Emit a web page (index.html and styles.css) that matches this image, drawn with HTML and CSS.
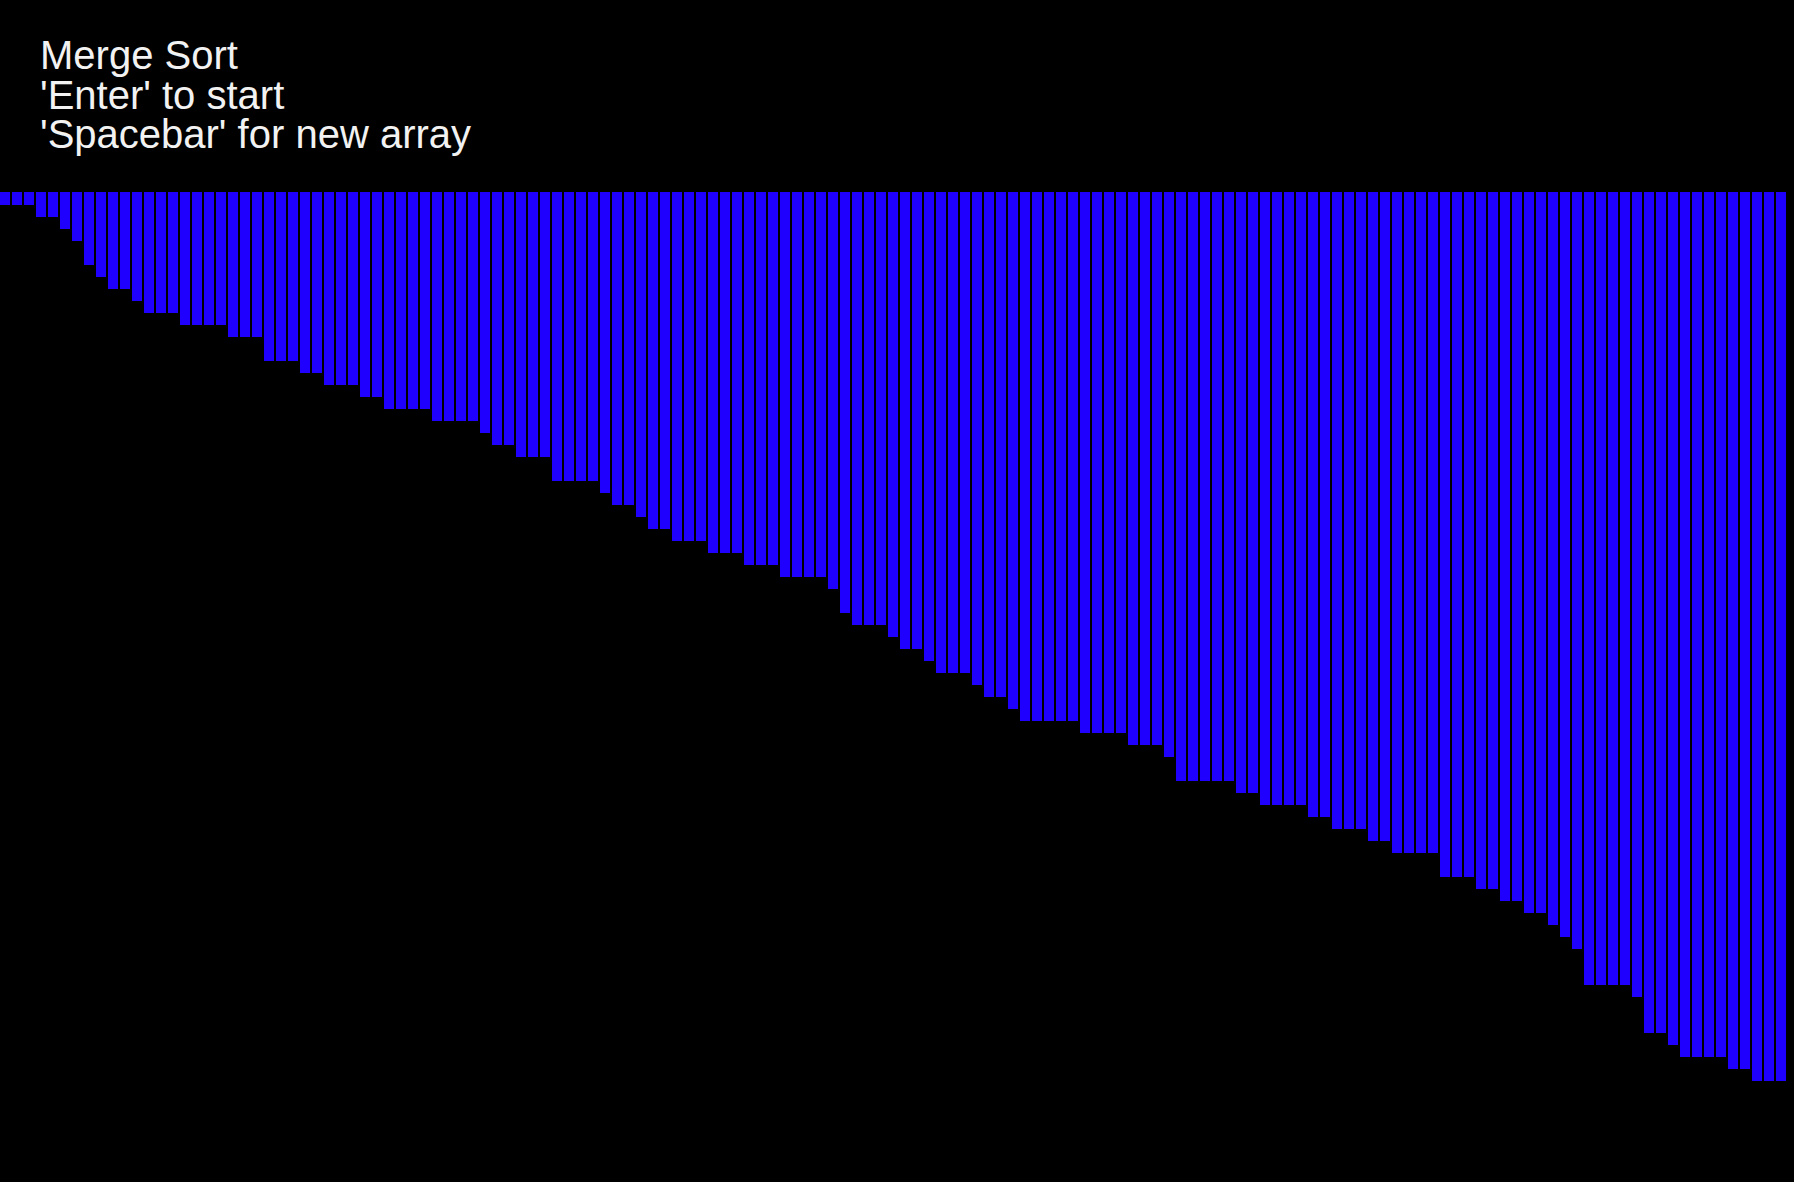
FILE: index.html
```html
<!DOCTYPE html>
<html lang="en">
<head>
    <meta charset="UTF-8">
    <meta name="viewport" content="width=device-width, initial-scale=1.0">
    <title>Merge Sort</title>
    <link rel="stylesheet" href="styles.css">
</head>
<body>
    <div id="info">
        <div>Merge Sort</div>
        <div>'Enter' to start</div>
        <div>'Spacebar' for new array</div>
    </div>

    <div id="bars"></div>

    <script src="script.js"></script>
</body>
</html>
```

FILE: styles.css
```css
body {
    font-family: "Liberation Sans", Arial, sans-serif;
    margin: 0;
    padding: 0;
    background-color: #000;
    color: #f2f2f2;
    height: 100vh;
    overflow: hidden;
}

#info {
    height: 192px;
    box-sizing: border-box;
    padding: 36px 0 0 40px;
    font-size: 40px;
    line-height: 39.5px;
}

#bars {
    display: flex;
    align-items: flex-start;
    gap: 2px;
}

.bar {
    width: 10px;
    flex-shrink: 0;
    background-color: #1f00ff;
}
```

FILE: script.js
```js
// sorted array as it stands after the sort finished
var values = [
    1, 1, 1, 2, 2, 3, 4, 6, 7, 8, 8, 9, 10, 10, 10, 11, 11, 11, 11, 12, 12, 12, 14, 14, 14,
    15, 15, 16, 16, 16, 17, 17, 18, 18, 18, 18, 19, 19, 19, 19, 20, 21, 21, 22, 22, 22, 24, 24, 24, 24,
    25, 26, 26, 27, 28, 28, 29, 29, 29, 30, 30, 30, 31, 31, 31, 32, 32, 32, 32, 33, 35, 36, 36, 36, 37,
    38, 38, 39, 40, 40, 40, 41, 42, 42, 43, 44, 44, 44, 44, 44, 45, 45, 45, 45, 46, 46, 46, 47, 49, 49,
    49, 49, 49, 50, 50, 51, 51, 51, 51, 52, 52, 53, 53, 53, 54, 54, 55, 55, 55, 55, 57, 57, 57, 58, 58,
    59, 59, 60, 60, 61, 62, 63, 66, 66, 66, 66, 67, 70, 70, 71, 72, 72, 72, 72, 73, 73, 74, 74, 74
];

var container = document.getElementById('bars');

values.forEach(function (v) {
    var bar = document.createElement('div');
    bar.className = 'bar';
    bar.style.height = (v * 12 + 1) + 'px';
    container.appendChild(bar);
});
```
